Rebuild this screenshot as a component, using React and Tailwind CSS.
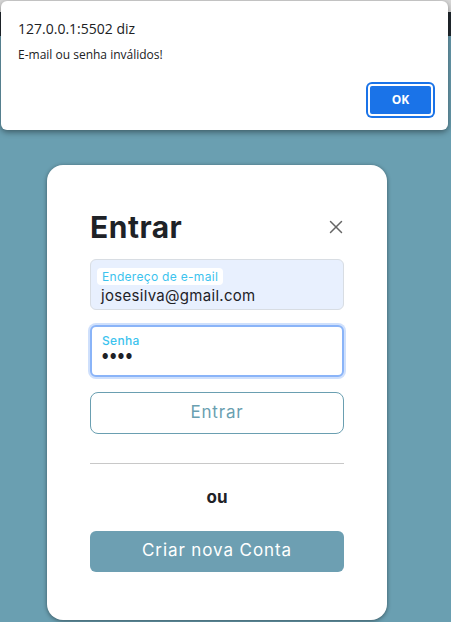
import { X } from "lucide-react";

export default function App() {
  return (
    <div className="relative min-h-screen overflow-hidden bg-[#6a9fb1]" style={{ height: 622 }}>
      {/* page header behind the alert */}
      <div className="h-[12px] bg-[#d9d9d9]" />
      <div className="h-[24px] bg-[#222a30]" />

      {/* login card */}
      <div className="ml-[47px] mt-[129px] w-[340px] h-[455px] rounded-2xl bg-white shadow-[0_1px_4px_rgba(0,0,0,0.45)] px-[43px] pt-[44px] font-['Inter',sans-serif]">
        <div className="flex items-center justify-between">
          <h1 className="text-[30px] leading-[36px] font-bold text-[#1e2227] tracking-[0.5px]">Entrar</h1>
          <X className="w-[22px] h-[22px] mr-[-3px] text-[#666]" strokeWidth={1.6} />
        </div>

        <div className="mt-[14px] h-[51px] rounded-md border border-[#d8dde3] bg-[#e8f0fe] px-[6px] pt-[3px]">
          <span className="inline-block rounded bg-white px-[5px] text-[12px] leading-[17px] tracking-[0.3px] text-[#3cc3ee]">Endereço de e-mail</span>
          <div className="pl-[4px] -mt-[1px] text-[15px] leading-[19px] tracking-[0.3px] text-[#1e2227]">josesilva@gmail.com</div>
        </div>

        <div className="mt-[15px] h-[52px] rounded-md border-2 border-[#8ab4f8] ring-2 ring-[#cfe0fc] bg-white px-[10px] pt-[5px]">
          <div className="text-[12px] leading-[17px] tracking-[0.3px] text-[#3cc3ee] font-medium">Senha</div>
          <div className="text-[7px] leading-[16px] text-[#1e2227] tracking-[1.5px]">●●●●</div>
        </div>

        <button className="mt-[15px] w-full h-[42px] rounded-lg border border-[#6a9fb1] bg-white text-[17px] tracking-[0.8px] text-[#6a9fb1]">
          Entrar
        </button>

        <div className="mt-[29px] border-t border-[#c8c8c8]" />

        <div className="mt-[21px] text-center text-[17px] font-bold text-[#1e2227]">ou</div>

        <button className="mt-[20px] w-full h-[41px] rounded-md bg-[#6d9fb2] text-[17px] tracking-[0.9px] text-white">
          Criar nova Conta
        </button>
      </div>

      {/* browser alert */}
      <div className="absolute left-[1px] top-[1px] w-[447px] h-[129px] rounded-md bg-white shadow-[0_2px_6px_rgba(0,0,0,0.45)] font-['Open_Sans',sans-serif]">
        <div className="pl-[17px] pt-[17px] text-[14px] leading-[22px] text-[#202124]">127.0.0.1:5502 diz</div>
        <div className="pl-[17px] pt-[6px] text-[12px] leading-[18px] text-[#202124]">E-mail ou senha inválidos!</div>
        <div className="flex justify-end pr-[15px] pt-[20px]">
          <button className="w-[65px] h-[32px] rounded-[4px] bg-[#1a73e8] text-white text-[12px] font-bold ring-2 ring-[#1a73e8] border-2 border-white">
            OK
          </button>
        </div>
      </div>
    </div>
  );
}
